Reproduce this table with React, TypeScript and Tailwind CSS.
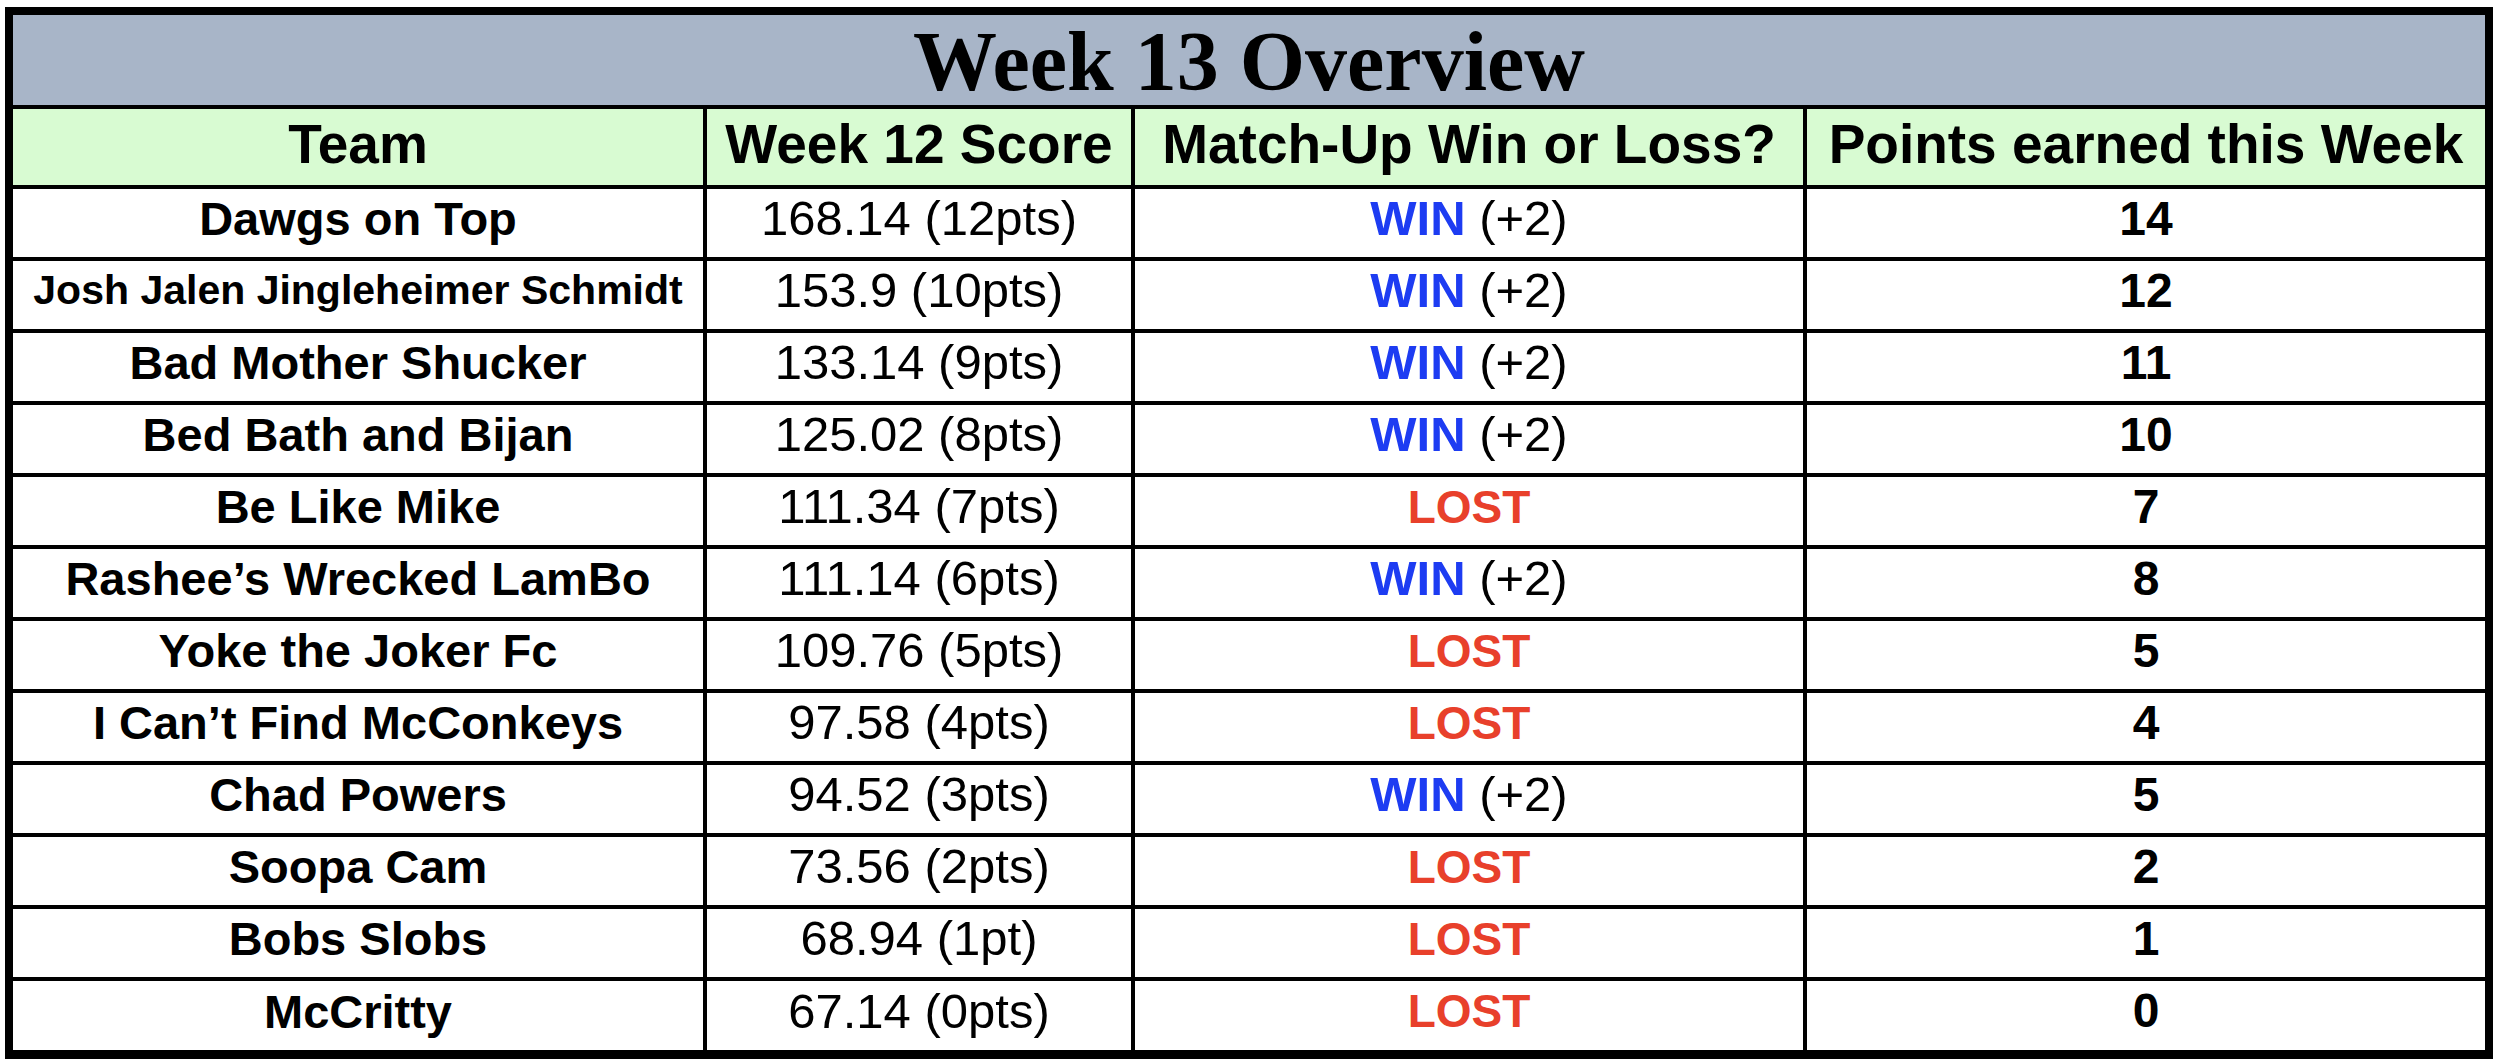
const rows = [
  { team: 'Dawgs on Top', score: '168.14 (12pts)', win: true, pts: 14 },
  { team: 'Josh Jalen Jingleheimer Schmidt', score: '153.9 (10pts)', win: true, pts: 12, small: true },
  { team: 'Bad Mother Shucker', score: '133.14 (9pts)', win: true, pts: 11 },
  { team: 'Bed Bath and Bijan', score: '125.02 (8pts)', win: true, pts: 10 },
  { team: 'Be Like Mike', score: '111.34 (7pts)', win: false, pts: 7 },
  { team: 'Rashee\u2019s Wrecked LamBo', score: '111.14 (6pts)', win: true, pts: 8 },
  { team: 'Yoke the Joker Fc', score: '109.76 (5pts)', win: false, pts: 5 },
  { team: 'I Can\u2019t Find McConkeys', score: '97.58 (4pts)', win: false, pts: 4 },
  { team: 'Chad Powers', score: '94.52 (3pts)', win: true, pts: 5 },
  { team: 'Soopa Cam', score: '73.56 (2pts)', win: false, pts: 2 },
  { team: 'Bobs Slobs', score: '68.94 (1pt)', win: false, pts: 1 },
  { team: 'McCritty', score: '67.14 (0pts)', win: false, pts: 0 },
]

const cell = 'flex items-center justify-center bg-white pb-[9px] leading-none whitespace-nowrap'

export default function App() {
  return (
    <div className="h-[1064px] w-[2501px] bg-white pl-[5px] pt-[7px] font-['Liberation_Sans',Arial,sans-serif] text-black">
      <div className="w-[2488px] border-8 border-b-[9px] border-black bg-black">
        <div className="grid grid-cols-[690px_424px_668px_678px] grid-rows-[90px_76px_repeat(11,68px)_69px] gap-[4px]">
          <div className="col-span-4 flex items-center justify-center bg-[#a8b5c8] pt-[4px] font-['Liberation_Serif',serif] text-[84px] font-bold leading-none">
            Week 13 Overview
          </div>

          {['Team', 'Week 12 Score', 'Match-Up Win or Loss?', 'Points earned this Week'].map((h) => (
            <div
              key={h}
              className="flex items-center justify-center whitespace-nowrap bg-[#d8fbd2] pb-[5px] text-[55px] font-bold leading-none"
            >
              {h}
            </div>
          ))}

          {rows.map((r) => (
            <div key={r.team} className="contents">
              <div className={`${cell} font-bold ${r.small ? 'text-[41px]' : 'text-[47px]'}`}>{r.team}</div>
              <div className={`${cell} text-[49px]`}>{r.score}</div>
              <div className={`${cell} text-[49px]`}>
                {r.win ? (
                  <>
                    <span className="font-bold text-[#1d3cf2]">WIN</span>
                    <span>&nbsp;(+2)</span>
                  </>
                ) : (
                  <span className="text-[46px] font-bold text-[#e8402b]">LOST</span>
                )}
              </div>
              <div className={`${cell} text-[48px] font-bold`}>{r.pts}</div>
            </div>
          ))}
        </div>
      </div>
    </div>
  )
}
